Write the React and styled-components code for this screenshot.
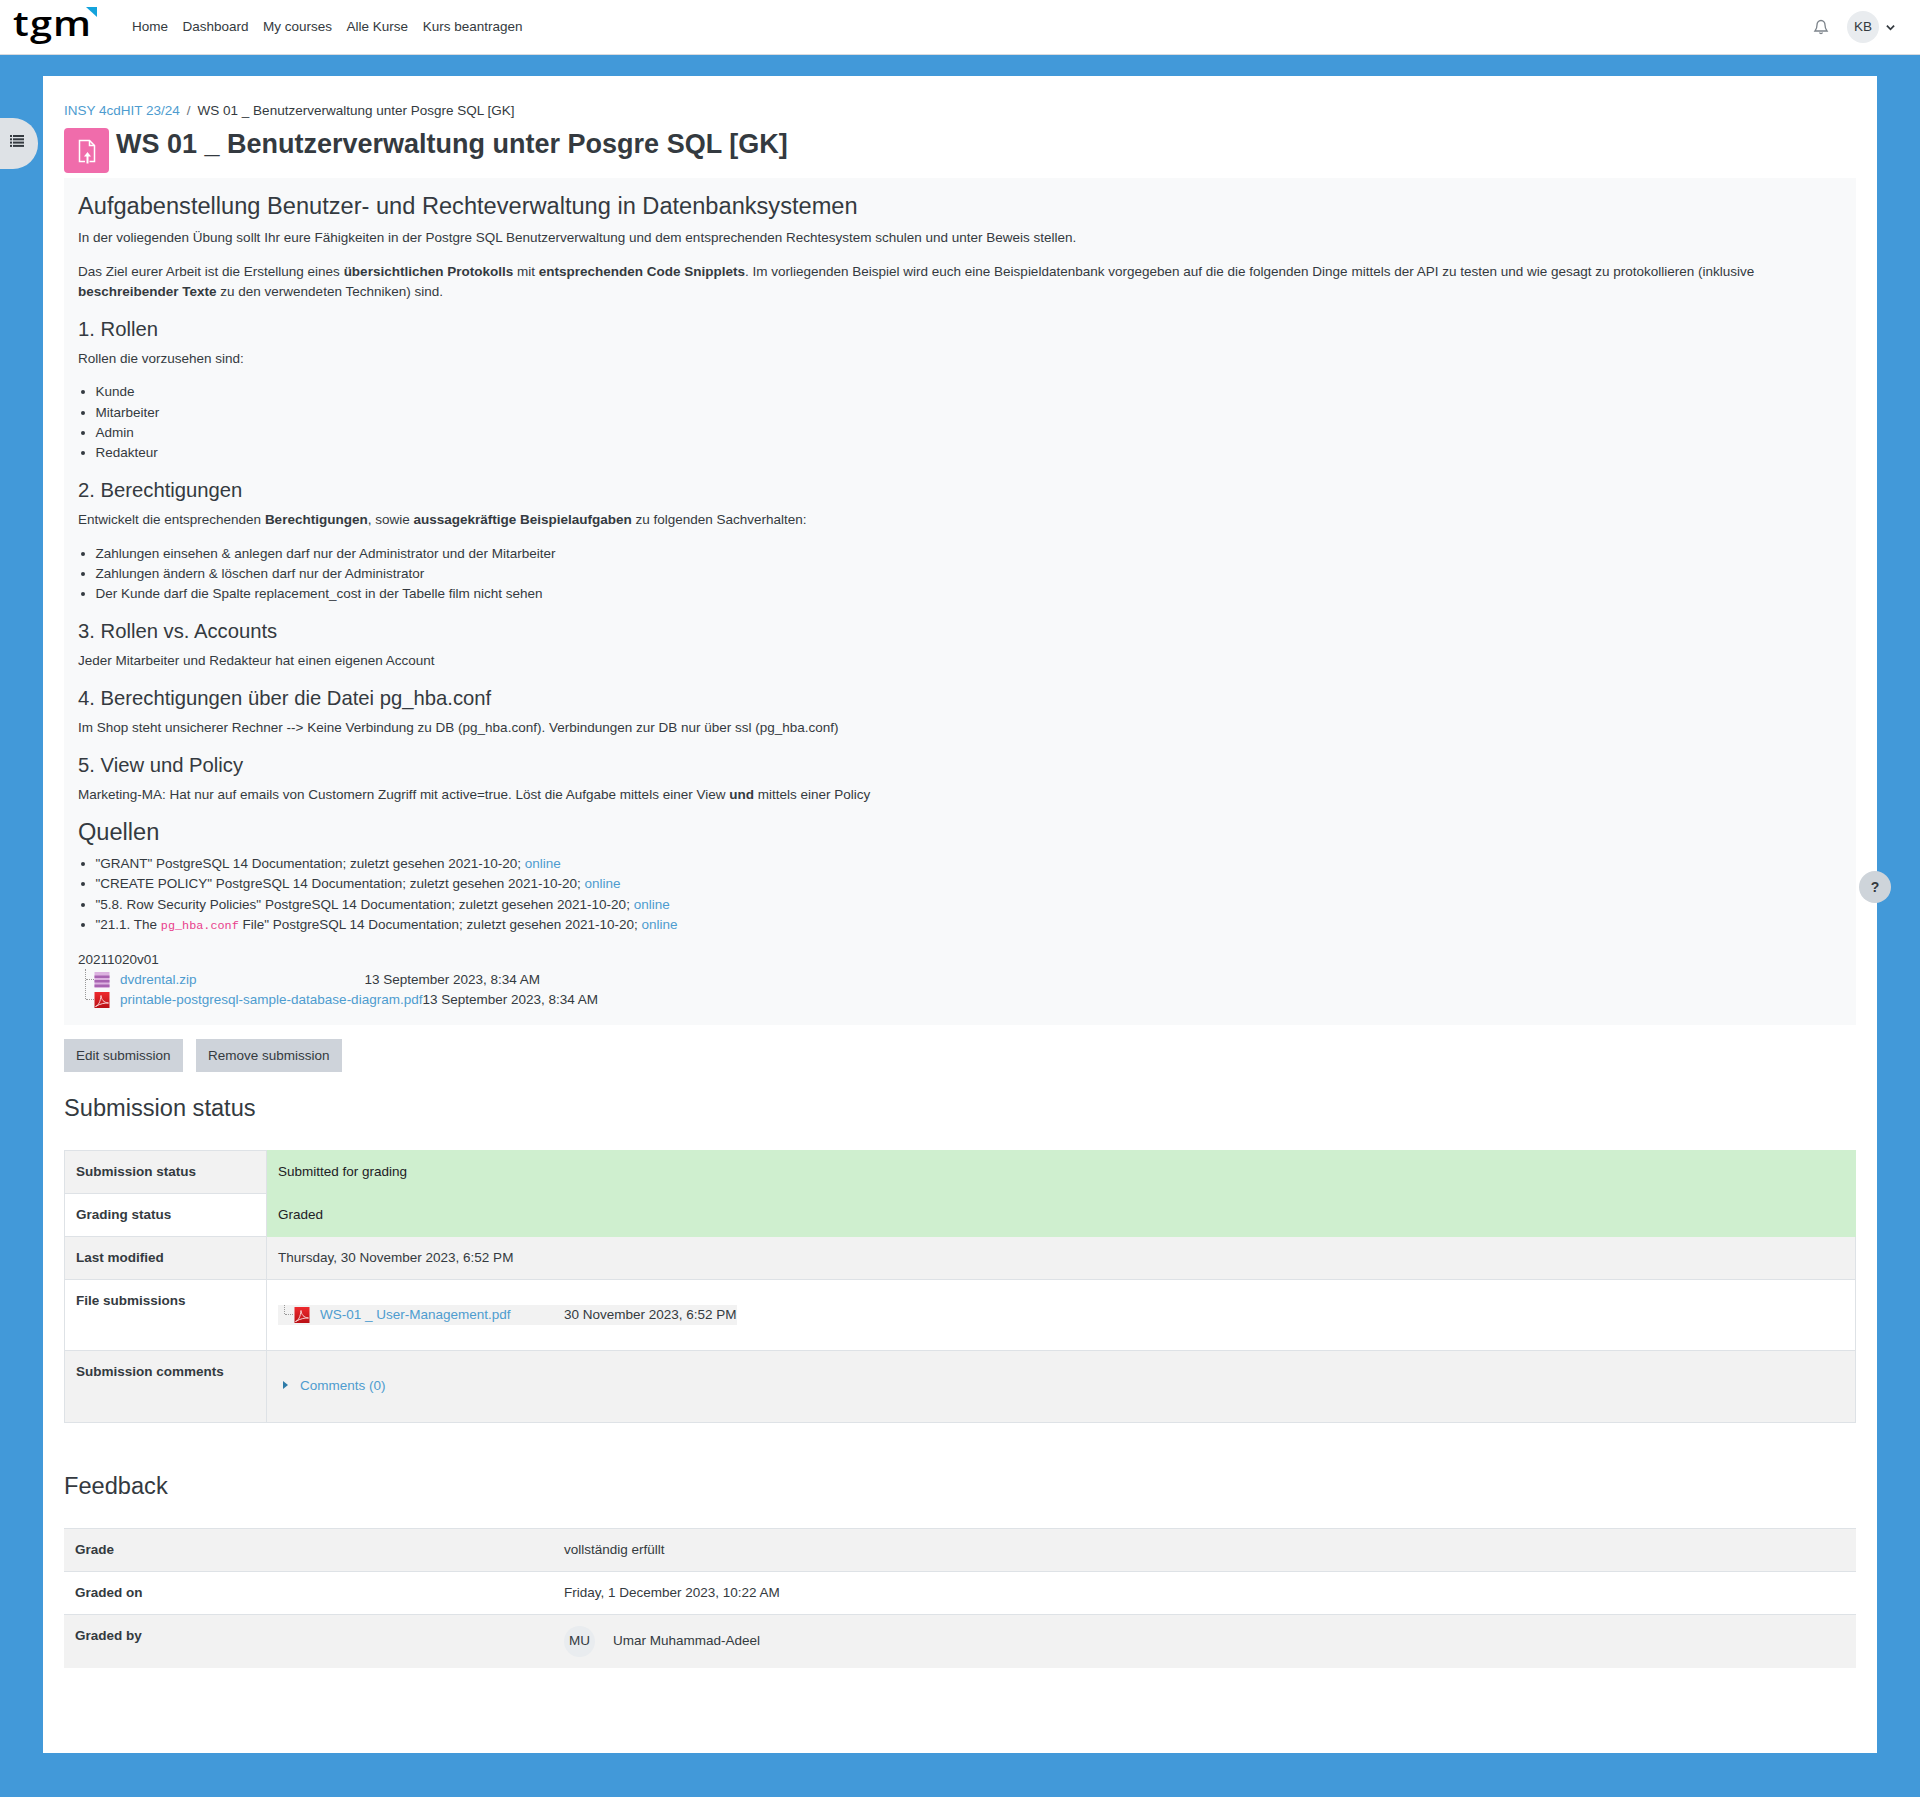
import React from 'react';
import styled, { createGlobalStyle } from 'styled-components';

const GlobalStyle = createGlobalStyle`
  html, body { margin: 0; padding: 0; }
  body {
    background: #4299d9;
    font-family: "Liberation Sans", Arial, sans-serif;
    font-size: 13.5px;
    line-height: 20.25px;
    color: #343a40;
  }
  a { color: #4e9ccf; text-decoration: none; }
`;

const Page = styled.div`
  position: relative;
  height: 1797px;
  overflow: hidden;
`;

const Navbar = styled.header`
  height: 54px;
  background: #fff;
  border-bottom: 1px solid #d8dade;
  display: flex;
  align-items: center;
  padding-right: 25px;
`;

const Logo = styled.div`
  position: relative;
  width: 132px;
  height: 54px;
  flex: none;
  span {
    position: absolute;
    left: 13px;
    top: 0;
    font-family: "Open Sans", sans-serif;
    font-size: 34px;
    line-height: 47px;
    font-weight: 600;
    color: #000;
    letter-spacing: 1px;
    transform: scaleX(1.17);
    transform-origin: left center;
  }
  i {
    position: absolute;
    left: 86px;
    top: 7px;
    width: 0;
    height: 0;
    border-top: 10px solid #14a3dc;
    border-left: 11px solid transparent;
  }
`;

const NavLinks = styled.nav`
  display: flex;
  gap: 14.5px;
  flex: 1;
  a { color: #343a40; line-height: 20px; }
`;

const NavIcons = styled.div`
  display: flex;
  align-items: center;
`;

const Bell = styled.svg`
  width: 16px;
  height: 16px;
  margin-right: 18px;
  color: #7c838a;
`;

const Avatar = styled.div`
  width: ${p => p.$size || 32}px;
  height: ${p => p.$size || 32}px;
  border-radius: 50%;
  background: #e9ecef;
  display: flex;
  align-items: center;
  justify-content: center;
  flex: none;
`;

const Chevron = styled.svg`
  width: 9px;
  height: 9px;
  margin-left: 7px;
`;

const DrawerToggle = styled.button`
  position: absolute;
  left: 0;
  top: 118px;
  width: 38px;
  height: 51px;
  border: 0;
  padding: 0 0 6px;
  background: #dee2e6;
  border-radius: 0 25px 25px 0;
  display: flex;
  align-items: center;
  justify-content: center;
  svg { width: 14px; height: 12px; margin-right: 4px; }
`;

const HelpButton = styled.div`
  position: absolute;
  left: 1859px;
  top: 871px;
  width: 32px;
  height: 32px;
  border-radius: 50%;
  background: #ced4da;
  color: #343a40;
  font-weight: 700;
  font-size: 14px;
  display: flex;
  align-items: center;
  justify-content: center;
`;

const Main = styled.main`
  margin: 21px 43px 0;
  height: 1677px;
  background: #fff;
  padding: 25px 21px 0;
  box-sizing: border-box;
`;

const Breadcrumb = styled.div`
  display: flex;
  gap: 7px;
  height: 20px;
  line-height: 20px;
  span.sep { color: #6a737b; }
`;

const TitleRow = styled.div`
  display: flex;
  margin: 7px 0 5px;
`;

const ActivityIcon = styled.div`
  width: 45px;
  height: 45px;
  border-radius: 4px;
  background: #f06cab;
  display: flex;
  align-items: center;
  justify-content: center;
  margin-right: 7px;
  svg { width: 24px; height: 24px; overflow: visible; }
`;

const Title = styled.h1`
  margin: 0;
  font-size: 27px;
  line-height: 32px;
  font-weight: 700;
`;

const Intro = styled.section`
  background: #f8f9fa;
  padding: 14px;
  height: 847px;
  box-sizing: border-box;
`;

const H2 = styled.h2`
  margin: 0 0 7.5px;
  font-size: 23.625px;
  line-height: 28.35px;
  font-weight: 400;
`;

const H3 = styled.h3`
  margin: 0 0 7.5px;
  padding-top: 1.25px;
  font-size: 20.25px;
  line-height: 24.3px;
  font-weight: 400;
`;

const P = styled.p`
  margin: 0 0 13.5px;
`;

const Bullets = styled.ul`
  margin: 0 0 13.5px;
  padding-left: 17.5px;
`;

const Code = styled.code`
  font-family: "Liberation Mono", monospace;
  font-size: 11.8px;
  color: #e83e8c;
`;

const FileTree = styled.div`
  margin-left: 6px;
`;

const FileRow = styled.div`
  display: flex;
`;

const FileName = styled.div`
  display: flex;
  align-items: center;
  height: 20px;
  min-width: ${p => p.$min || 0}px;
  box-sizing: border-box;
  position: relative;
  padding-left: ${p => p.$indent || 10}px;
`;

const Branch = styled.i`
  position: absolute;
  left: ${p => p.$left || 1}px;
  top: ${p => p.$last ? 0 : -1}px;
  width: 8px;
  height: ${p => p.$last ? 9 : 20}px;
  border-left: 1px dotted #999;
  &::after {
    content: '';
    position: absolute;
    left: 0;
    top: ${p => p.$last ? 9 : 10}px;
    width: 8px;
    border-top: 1px dotted #999;
  }
`;

const FileIcon = styled.svg`
  width: 16px;
  height: 16px;
  flex: none;
  margin-right: 10px;
`;

const Buttons = styled.div`
  display: flex;
  gap: 13.5px;
  margin-top: 14px;
`;

const Button = styled.button`
  height: 33px;
  border: 0;
  padding: 0 12px;
  background: #ced3da;
  color: #343a40;
  font: inherit;
  line-height: 20px;
`;

const SectionTitle = styled.h2`
  margin: ${p => p.$top}px 0 ${p => p.$bottom}px;
  font-size: 23.625px;
  line-height: 29px;
  font-weight: 400;
`;

const Table = styled.table`
  width: 100%;
  border-collapse: collapse;
  table-layout: fixed;
  border: 1px solid #dee2e6;
  th, td {
    padding: 11px;
    border: 1px solid #dee2e6;
    text-align: left;
    vertical-align: top;
    font-weight: 400;
    line-height: 20px;
  }
  th { font-weight: 700; }
  th:first-child { width: 179px; }
  tr:nth-child(odd) { background: #f2f2f2; }
`;

const StatusCell = styled.td`
  && { background: #cfefcf; border-color: #cfefcf; color: #1d2125; }
`;

const SubmittedFile = styled.div`
  display: inline-flex;
  vertical-align: top;
  background: #f2f2f2;
  margin: 14px 0 14px;
`;

const CommentsLink = styled.div`
  display: flex;
  align-items: center;
  margin: 14px 0 15px;
  a { margin-left: 12px; }
  i {
    width: 0;
    height: 0;
    margin-left: 5px;
    border-left: 5px solid #2e7ba8;
    border-top: 4px solid transparent;
    border-bottom: 4px solid transparent;
    margin-bottom: 2px;
  }
`;

const FeedbackTable = styled.div`
  border-top: 1px solid #dee2e6;
`;

const FeedbackRow = styled.div`
  display: grid;
  grid-template-columns: 489px 1fr;
  min-height: 42px;
  align-items: ${p => p.$top ? 'start' : 'center'};
  padding: 0 11px;
  background: ${p => p.$shaded ? '#f2f2f2' : '#fff'};
  border-top: ${p => p.$line ? '1px solid #dee2e6' : '0'};
  strong { padding-top: ${p => p.$top ? '11px' : '0'}; }
`;

const Grader = styled.div`
  display: flex;
  align-items: center;
  gap: 18px;
  padding: 11px 0 11px;
`;

const PdfIcon = () => (
  <FileIcon viewBox="0 0 16 16">
    <defs>
      <linearGradient id="pdfg" x1="0" y1="0" x2="0" y2="1">
        <stop offset="0" stopColor="#ee2a2e" />
        <stop offset="1" stopColor="#b90f14" />
      </linearGradient>
    </defs>
    <rect x="0.500" y="0" width="15" height="16" fill="url(#pdfg)" />
    <path d="M1.500 14.500c3-1 5-5 5.500-11 .4 4 2.500 7 7.500 7.500-3-.2-8 .5-13 3.500z" fill="none" stroke="#f8d2d2" strokeWidth="1" />
  </FileIcon>
);

const ZipIcon = () => (
  <FileIcon viewBox="0 0 16 16">
    <rect x="0.500" y="0" width="15" height="16" fill="#dcb3e0" />
    <rect x="0.500" y="3.500" width="15" height="2.500" fill="#a864b2" />
    <rect x="0.500" y="8" width="15" height="2.500" fill="#a864b2" />
    <rect x="0.500" y="12.500" width="15" height="2.500" fill="#a864b2" />
  </FileIcon>
);

const sources = [
  '"GRANT" PostgreSQL 14 Documentation; zuletzt gesehen 2021-10-20; ',
  '"CREATE POLICY" PostgreSQL 14 Documentation; zuletzt gesehen 2021-10-20; ',
  '"5.8. Row Security Policies" PostgreSQL 14 Documentation; zuletzt gesehen 2021-10-20; ',
];

export default function App() {
  return (
    <Page>
      <GlobalStyle />
      <Navbar>
        <Logo><span>tgm</span><i /></Logo>
        <NavLinks>
          <a href="#">Home</a>
          <a href="#">Dashboard</a>
          <a href="#">My courses</a>
          <a href="#">Alle Kurse</a>
          <a href="#">Kurs beantragen</a>
        </NavLinks>
        <NavIcons>
          <Bell viewBox="0 0 16 16" fill="none" stroke="currentColor" strokeWidth="1.300">
            <path d="M8 1.500c-2.600 0-4 2-4 4.500 0 3-.8 4.500-2 6h12c-1.200-1.500-2-3-2-6 0-2.500-1.400-4.500-4-4.500z" />
            <path d="M6.500 13.500a1.600 1.600 0 0 0 3 0" />
          </Bell>
          <Avatar>KB</Avatar>
          <Chevron viewBox="0 0 10 10" fill="none" stroke="#343a40" strokeWidth="2">
            <path d="M1 3l4 4 4-4" />
          </Chevron>
        </NavIcons>
      </Navbar>
      <DrawerToggle aria-label="Course index">
        <svg viewBox="0 0 14 12" fill="#343a40">
          <rect x="0" y="0" width="2" height="2" /><rect x="3" y="0" width="11" height="2" />
          <rect x="0" y="3.300" width="2" height="2" /><rect x="3" y="3.300" width="11" height="2" />
          <rect x="0" y="6.600" width="2" height="2" /><rect x="3" y="6.600" width="11" height="2" />
          <rect x="0" y="9.900" width="2" height="2" /><rect x="3" y="9.900" width="11" height="2" />
        </svg>
      </DrawerToggle>
      <HelpButton>?</HelpButton>
      <Main>
        <Breadcrumb>
          <a href="#">INSY 4cdHIT 23/24</a>
          <span className="sep">/</span>
          <span>WS 01 _ Benutzerverwaltung unter Posgre SQL [GK]</span>
        </Breadcrumb>
        <TitleRow>
          <ActivityIcon>
            <svg viewBox="0 0 24 24" fill="none" stroke="#fff" strokeWidth="1.500">
              <path d="M10 22.500H4.500V1.500h10l5 5v16H14.500" />
              <path d="M14.500 1.500v5h5" />
              <path d="M12.500 24.500V15" strokeWidth="2" />
              <path d="M9 17.500l3.500-4.500 3.500 4.500z" fill="#fff" stroke="none" />
            </svg>
          </ActivityIcon>
          <Title>WS 01 _ Benutzerverwaltung unter Posgre SQL [GK]</Title>
        </TitleRow>
        <Intro>
          <H2>Aufgabenstellung Benutzer- und Rechteverwaltung in Datenbanksystemen</H2>
          <P>In der voliegenden Übung sollt Ihr eure Fähigkeiten in der Postgre SQL Benutzerverwaltung und dem entsprechenden Rechtesystem schulen und unter Beweis stellen.</P>
          <P>Das Ziel eurer Arbeit ist die Erstellung eines <strong>übersichtlichen Protokolls</strong> mit <strong>entsprechenden Code Snipplets</strong>. Im vorliegenden Beispiel wird euch eine Beispieldatenbank vorgegeben auf die die folgenden Dinge mittels der API zu testen und wie gesagt zu protokollieren (inklusive <strong>beschreibender Texte</strong> zu den verwendeten Techniken) sind.</P>
          <H3>1. Rollen</H3>
          <P>Rollen die vorzusehen sind:</P>
          <Bullets>
            <li>Kunde</li>
            <li>Mitarbeiter</li>
            <li>Admin</li>
            <li>Redakteur</li>
          </Bullets>
          <H3>2. Berechtigungen</H3>
          <P>Entwickelt die entsprechenden <strong>Berechtigungen</strong>, sowie <strong>aussagekräftige Beispielaufgaben</strong> zu folgenden Sachverhalten:</P>
          <Bullets>
            <li>Zahlungen einsehen &amp; anlegen darf nur der Administrator und der Mitarbeiter</li>
            <li>Zahlungen ändern &amp; löschen darf nur der Administrator</li>
            <li>Der Kunde darf die Spalte replacement_cost in der Tabelle film nicht sehen</li>
          </Bullets>
          <H3>3. Rollen vs. Accounts</H3>
          <P>Jeder Mitarbeiter und Redakteur hat einen eigenen Account</P>
          <H3>4. Berechtigungen über die Datei pg_hba.conf</H3>
          <P>Im Shop steht unsicherer Rechner --&gt; Keine Verbindung zu DB (pg_hba.conf). Verbindungen zur DB nur über ssl (pg_hba.conf)</P>
          <H3>5. View und Policy</H3>
          <P>Marketing-MA: Hat nur auf emails von Customern Zugriff mit active=true. Löst die Aufgabe mittels einer View <strong>und</strong> mittels einer Policy</P>
          <H2>Quellen</H2>
          <Bullets>
            {sources.map(text => (
              <li key={text}>{text}<a href="#">online</a></li>
            ))}
            <li>"21.1. The <Code>pg_hba.conf</Code> File" PostgreSQL 14 Documentation; zuletzt gesehen 2021-10-20; <a href="#">online</a></li>
          </Bullets>
          <div>20211020v01</div>
          <FileTree>
            <FileRow>
              <FileName $min={280.5}><Branch /><ZipIcon /><a href="#">dvdrental.zip</a></FileName>
              <div>13 September 2023, 8:34 AM</div>
            </FileRow>
            <FileRow>
              <FileName><Branch $last /><PdfIcon /><a href="#">printable-postgresql-sample-database-diagram.pdf</a></FileName>
              <div>13 September 2023, 8:34 AM</div>
            </FileRow>
          </FileTree>
        </Intro>
        <Buttons>
          <Button>Edit submission</Button>
          <Button>Remove submission</Button>
        </Buttons>
        <SectionTitle $top={22} $bottom={27}>Submission status</SectionTitle>
        <Table>
          <tbody>
            <tr><th scope="row">Submission status</th><StatusCell>Submitted for grading</StatusCell></tr>
            <tr><th scope="row">Grading status</th><StatusCell>Graded</StatusCell></tr>
            <tr><th scope="row">Last modified</th><td>Thursday, 30 November 2023, 6:52 PM</td></tr>
            <tr>
              <th scope="row">File submissions</th>
              <td>
                <SubmittedFile>
                  <FileName $min={286} $indent={16}><Branch $last $left={6} /><PdfIcon /><a href="#">WS-01 _ User-Management.pdf</a></FileName>
                  <div>30 November 2023, 6:52 PM</div>
                </SubmittedFile>
              </td>
            </tr>
            <tr>
              <th scope="row">Submission comments</th>
              <td><CommentsLink><i /><a href="#">Comments (0)</a></CommentsLink></td>
            </tr>
          </tbody>
        </Table>
        <SectionTitle $top={49} $bottom={27}>Feedback</SectionTitle>
        <FeedbackTable>
          <FeedbackRow $shaded><strong>Grade</strong><span>vollständig erfüllt</span></FeedbackRow>
          <FeedbackRow $line><strong>Graded on</strong><span>Friday, 1 December 2023, 10:22 AM</span></FeedbackRow>
          <FeedbackRow $shaded $line $top>
            <strong>Graded by</strong>
            <Grader><Avatar $size={31}>MU</Avatar><span>Umar Muhammad-Adeel</span></Grader>
          </FeedbackRow>
        </FeedbackTable>
      </Main>
    </Page>
  );
}
